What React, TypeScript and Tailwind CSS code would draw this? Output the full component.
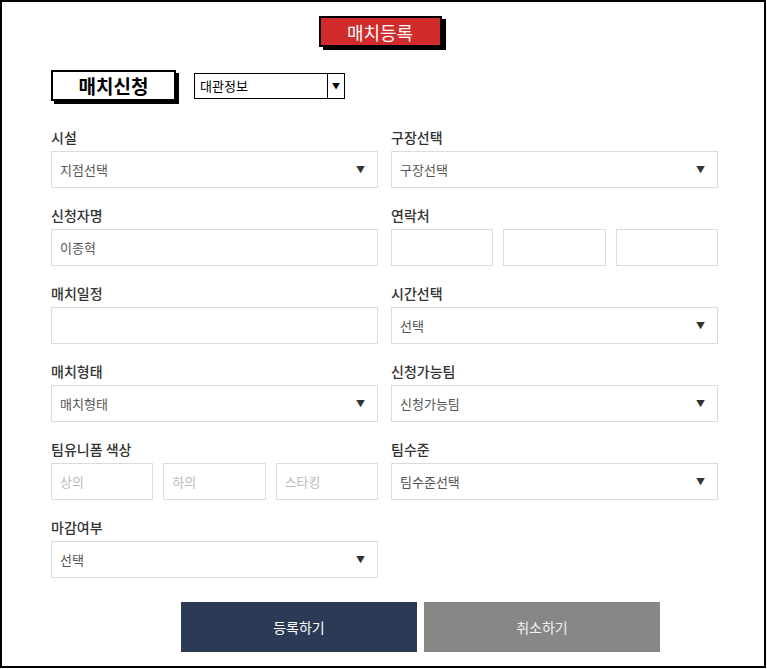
import React from "react";

const font = { fontFamily: '"Noto Sans CJK KR", "Noto Sans", sans-serif' };

function Label({ children }: { children: React.ReactNode }) {
  return <div className="h-5 text-[14px] leading-5 font-medium text-[#333]">{children}</div>;
}

function Select({ value }: { value: string }) {
  return (
    <div className="mt-1 h-[37px] border border-[#dcdcdc] bg-white flex items-center justify-between pl-[8px] pr-[12px]">
      <span className="text-[13px] text-[#555]">{value}</span>
      <span className="text-[9px] text-[#333]">▼</span>
    </div>
  );
}

function Input({ value, placeholder }: { value?: string; placeholder?: string }) {
  return (
    <div className="h-[37px] border border-[#dcdcdc] bg-white flex items-center pl-[8px]">
      {value ? (
        <span className="text-[13px] text-[#555]">{value}</span>
      ) : (
        <span className="text-[13px] text-[#bbb]">{placeholder}</span>
      )}
    </div>
  );
}

function Field({ label, children }: { label: string; children: React.ReactNode }) {
  return (
    <div className="flex flex-col">
      <Label>{label}</Label>
      {children}
    </div>
  );
}

export default function App() {
  return (
    <div className="w-[767px] h-[669px] bg-white" style={font}>
      <div className="w-[766px] h-[668px] border-2 border-black flex flex-col">
        {/* title */}
        <div className="flex justify-center pt-[14px] pr-[6px]">
          <div className="w-[123px] h-[31px] bg-[#d12b2b] border-2 border-black shadow-[4px_3px_0_#000] flex items-center justify-center text-white text-[18px] leading-none">
            매치등록
          </div>
        </div>

        {/* header row */}
        <div className="flex items-center mt-[23px] pl-[49px] gap-[18px]">
          <div className="w-[125px] h-[31px] border-2 border-black bg-white shadow-[3px_3px_0_#000] flex items-center justify-center text-[19px] font-bold text-black leading-none">
            매치신청
          </div>
          <div className="w-[151px] h-[26px] border-[1.5px] border-black bg-white flex items-stretch">
            <div className="flex-1 flex items-center pl-[5px] text-[13px] text-black">대관정보</div>
            <div className="w-[17px] border-l-[1.5px] border-black flex items-center justify-center text-[8px] text-black">
              ▼
            </div>
          </div>
        </div>

        {/* form */}
        <div className="grid grid-cols-[327px_327px] gap-x-[13px] gap-y-[17px] mt-[26px] pl-[49px]">
          <Field label="시설">
            <Select value="지점선택" />
          </Field>
          <Field label="구장선택">
            <Select value="구장선택" />
          </Field>

          <Field label="신청자명">
            <div className="mt-1">
              <Input value="이종혁" />
            </div>
          </Field>
          <Field label="연락처">
            <div className="mt-1 grid grid-cols-3 gap-[10px]">
              <Input />
              <Input />
              <Input />
            </div>
          </Field>

          <Field label="매치일정">
            <div className="mt-1">
              <Input />
            </div>
          </Field>
          <Field label="시간선택">
            <Select value="선택" />
          </Field>

          <Field label="매치형태">
            <Select value="매치형태" />
          </Field>
          <Field label="신청가능팀">
            <Select value="신청가능팀" />
          </Field>

          <Field label="팀유니폼 색상">
            <div className="mt-1 grid grid-cols-3 gap-[10px]">
              <Input placeholder="상의" />
              <Input placeholder="하의" />
              <Input placeholder="스타킹" />
            </div>
          </Field>
          <Field label="팀수준">
            <Select value="팀수준선택" />
          </Field>

          <Field label="마감여부">
            <Select value="선택" />
          </Field>
        </div>

        {/* buttons */}
        <div className="flex gap-[7px] mt-[24px] pl-[179px]">
          <button className="w-[236px] h-[50px] bg-[#2c3b55] text-white text-[14px]">등록하기</button>
          <button className="w-[236px] h-[50px] bg-[#878787] text-[#f2f2f2] text-[14px]">취소하기</button>
        </div>
      </div>
    </div>
  );
}
